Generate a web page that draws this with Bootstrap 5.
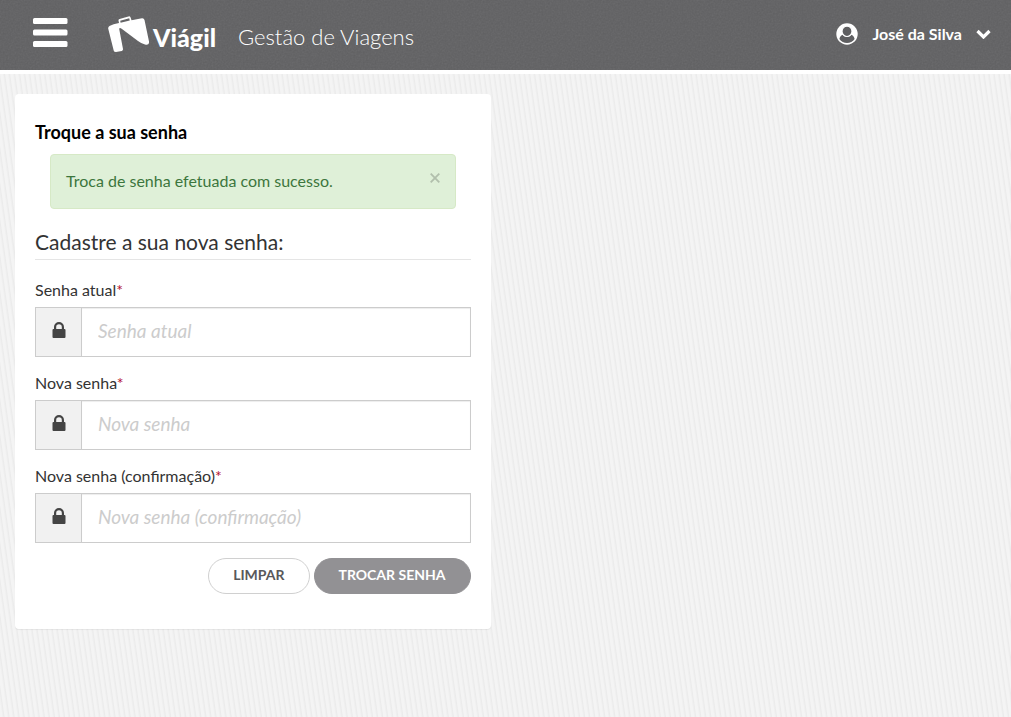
<!DOCTYPE html>
<html lang="pt-BR">
<head>
<meta charset="utf-8">
<meta name="viewport" content="width=device-width, initial-scale=1">
<title>Viágil - Gestão de Viagens</title>
<link href="https://cdn.jsdelivr.net/npm/bootstrap@5.3.0/dist/css/bootstrap.min.css" rel="stylesheet">
<style>
body{font-family:Lato,"Liberation Sans",sans-serif;font-size:16px;line-height:23px;color:#333;min-height:100vh;
background:repeating-linear-gradient(82deg,#f4f4f4 0,#f4f4f4 2px,#ebebeb 4px,#f4f4f4 5px)}
.topbar{background-color:#5f5f61;background-image:url("data:image/svg+xml,%3Csvg xmlns='http://www.w3.org/2000/svg' width='120' height='120'%3E%3Cfilter id='n'%3E%3CfeTurbulence type='fractalNoise' baseFrequency='.6' stitchTiles='stitch'/%3E%3CfeColorMatrix type='saturate' values='0'/%3E%3C/filter%3E%3Crect width='120' height='120' filter='url(%23n)' opacity='.12'/%3E%3C/svg%3E");
height:74px;border-bottom:4px solid #fff;padding:0 20px 0 32px}
.menu-btn{width:36px;margin-right:40px;line-height:1}
.brand-word{font-weight:900;font-size:25px;line-height:32px;margin-left:4px;padding-top:4px}
.system-name{font-weight:300;font-size:22px;line-height:30px;margin-left:22px;padding-top:4px}
.user-btn{gap:14px;padding:0 0 2px}
.page{padding:20px 15px}
.gutter-wide{--bs-gutter-x:30px}
.panel{background:#fff;border-radius:4px;padding:27px 20px 35px;box-shadow:0 1px 1px rgba(0,0,0,.06)}
.panel-name{font-size:18px;font-weight:700;line-height:23px;color:#000;margin-bottom:10px}
.notice{--bs-alert-bg:#dff0d8;--bs-alert-border-color:#d6e9c6;--bs-alert-color:#3c763d;--bs-alert-padding-x:15px;--bs-alert-padding-y:14px;--bs-alert-border-radius:4px;margin:0 15px 19px;min-height:55px}
.dismiss{opacity:.2;line-height:1}
legend{font-size:21px;line-height:28px;border-bottom:1px solid #e5e5e5;padding-bottom:3px;margin-bottom:18px}
.field{margin-bottom:14px}
.field label{line-height:23px;margin-bottom:6px}
.req{color:#b5122f}
.field .input-group-text{width:47px;background:#f1f1f1;border-color:#ccc;border-radius:0;padding:0 0 4px}
.field .form-control{height:50px;border-color:#ccc;border-radius:0;font-size:19px;line-height:28px;padding:6px 16px 10px;box-shadow:inset 0 1px 1px rgba(0,0,0,.075)}
.field .form-control::placeholder{color:#ccc;font-style:italic;opacity:1}
.actions{padding-top:1px}
.pill{font-size:14px;font-weight:700;line-height:20px;padding:6px 24px 8px;border-radius:18px}
.pill-light{color:#58585a;border-color:#d0d0d0;background:#fff}
.pill-dark{color:#fff;border-color:#929194;background:#929194}
</style>
</head>
<body>
<svg class="d-none" aria-hidden="true"><symbol id="lock" viewBox="0 0 14 16"><path fill="#444" d="M1.500 7H2V5a5 5 0 0 1 10 0v2h.5a1 1 0 0 1 1 1v7a1 1 0 0 1-1 1h-11a1 1 0 0 1-1-1V8a1 1 0 0 1 1-1zM4.200 7h5.600V5a2.800 2.800 0 0 0-5.600 0z"/></symbol></svg>
<header class="topbar d-flex align-items-center text-white">
  <button type="button" class="btn menu-btn p-0 border-0" aria-label="Menu">
    <svg class="d-block" width="36" height="34" viewBox="0 0 36 34" fill="#fff"><rect x="1" y="0" width="34.500" height="6" rx="1.500"/><rect x="1" y="11.500" width="34.500" height="6" rx="1.500"/><rect x="1" y="23" width="34.500" height="6" rx="1.500"/></svg>
  </button>
  <a href="#" class="d-flex align-items-center text-white text-decoration-none">
    <svg width="41" height="38" viewBox="0 0 41 38" fill="#fff" aria-hidden="true"><path fill-rule="evenodd" d="M1.500 10Q5 8 11 7L10.500 4.500Q10.300 3.500 11.500 3L20.500 .4Q22 0 22.600 1.500L23.500 4.200L34 2.200Q36 2 36.500 4L41 25.500Q41.500 29.500 37 28.500Q34 28 30 25L14 13Q11 11 11.300 13.500L15 33Q15.200 34.500 13.800 34.900L8 36Q6 36 5.700 34.500L.3 13Q-.2 11 1.500 10zM12.600 6.700L21.800 4.600L21.200 2.200L12.200 4.700z"/></svg>
    <span class="brand-word">Viágil</span>
  </a>
  <span class="system-name">Gestão de Viagens</span>
  <button type="button" class="btn user-btn ms-auto border-0 text-white fw-bold d-flex align-items-center">
    <svg width="22" height="22" viewBox="0 0 22 22" aria-hidden="true"><circle cx="11" cy="11" r="10.700" fill="#fff"/><path fill="#5f5f61" d="M7 11.800C5 12.200 3.800 13.800 3.400 16a9.200 9.200 0 0 0 15.200 0C18.200 13.800 17 12.200 15 11.800Q11 15.500 7 11.800z"/><ellipse cx="11" cy="8.300" rx="5" ry="5.200" fill="#5f5f61" stroke="#fff" stroke-width="1.200"/></svg>
    <span>José da Silva</span>
    <svg width="15" height="10" viewBox="0 0 15 10" aria-hidden="true"><path d="M1.500 2L7.500 8L13.500 2" fill="none" stroke="#fff" stroke-width="3.200"/></svg>
  </button>
</header>
<main class="container-fluid page">
  <div class="row gutter-wide">
    <div class="col-12 col-sm-6">
      <section class="panel">
        <h1 class="panel-name">Troque a sua senha</h1>
        <div class="alert notice d-flex justify-content-between align-items-start" role="alert">
          <span>Troca de senha efetuada com sucesso.</span>
          <button type="button" class="btn dismiss p-0 border-0 mt-1" data-bs-dismiss="alert" aria-label="Fechar"><svg class="d-block" width="10" height="10" viewBox="0 0 10 10"><path d="M.7.700l8.600 8.600M9.300.7L.7 9.300" stroke="#000" stroke-width="1.800"/></svg></button>
        </div>
        <form>
          <fieldset>
            <legend>Cadastre a sua nova senha:</legend>
            <div class="field"><label for="atual">Senha atual<span class="req">*</span></label>
              <div class="input-group"><span class="input-group-text justify-content-center"><svg width="14" height="16"><use href="#lock"/></svg></span><input type="password" class="form-control" id="atual" placeholder="Senha atual"></div></div>
            <div class="field"><label for="nova">Nova senha<span class="req">*</span></label>
              <div class="input-group"><span class="input-group-text justify-content-center"><svg width="14" height="16"><use href="#lock"/></svg></span><input type="password" class="form-control" id="nova" placeholder="Nova senha"></div></div>
            <div class="field"><label for="conf">Nova senha (confirmação)<span class="req">*</span></label>
              <div class="input-group"><span class="input-group-text justify-content-center"><svg width="14" height="16"><use href="#lock"/></svg></span><input type="password" class="form-control" id="conf" placeholder="Nova senha (confirmação)"></div></div>
          </fieldset>
          <div class="actions d-flex justify-content-end gap-1">
            <button type="reset" class="btn pill pill-light">LIMPAR</button>
            <button type="button" class="btn pill pill-dark">TROCAR SENHA</button>
          </div>
        </form>
      </section>
    </div>
  </div>
</main>
<script src="https://cdn.jsdelivr.net/npm/bootstrap@5.3.0/dist/js/bootstrap.bundle.min.js"></script>
</body>
</html>
